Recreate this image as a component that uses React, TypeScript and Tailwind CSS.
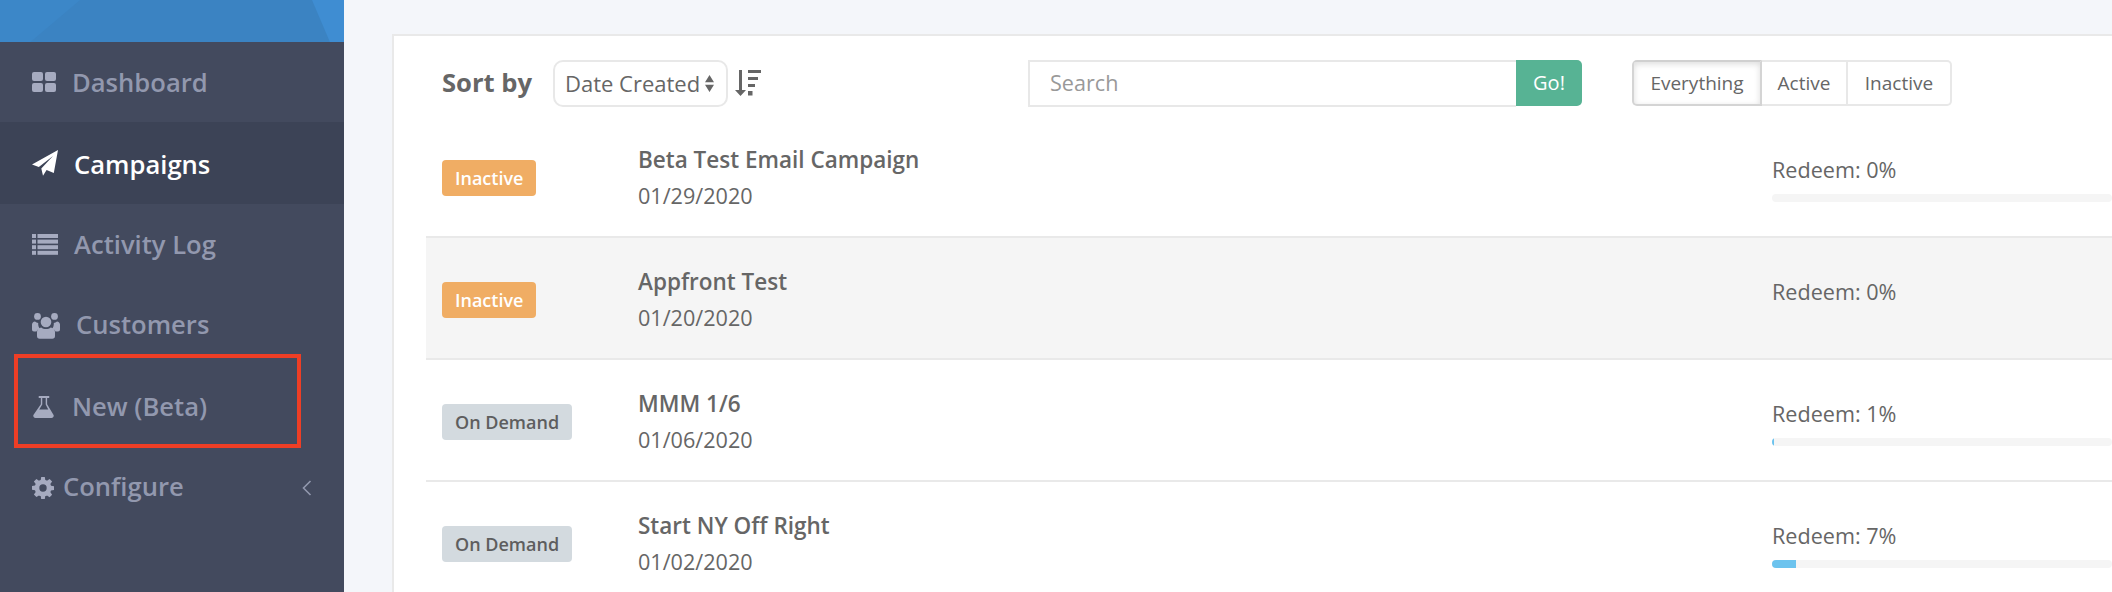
const NAV_ROW = 'flex h-[81px] shrink-0 items-center pl-8 text-[25.6px] font-semibold text-[#9298ae]';

function NavIcon({ name }: { name: string }) {
  if (name === 'dashboard') {
    return (
      <svg width="24" height="20" viewBox="0 0 24 20" fill="currentColor">
        <rect x="0" y="0" width="11" height="9" rx="2" />
        <rect x="13" y="0" width="11" height="9" rx="2" />
        <rect x="0" y="11" width="11" height="9" rx="2" />
        <rect x="13" y="11" width="11" height="9" rx="2" />
      </svg>
    );
  }
  if (name === 'plane') {
    return (
      <svg width="26" height="26" viewBox="0 0 26 26" fill="currentColor">
        <path d="M26 0 21.800 23 14.600 20 11 25.800 9.300 18.500 21 6 6.800 17 0 14.600z" />
      </svg>
    );
  }
  if (name === 'list') {
    return (
      <svg width="26" height="21" viewBox="0 0 26 21" fill="currentColor">
        <rect x="0" y="0" width="4" height="4" />
        <rect x="0" y="5.600" width="4" height="4" />
        <rect x="0" y="11.200" width="4" height="4" />
        <rect x="0" y="16.800" width="4" height="4" />
        <rect x="5.500" y="0" width="20.500" height="4" />
        <rect x="5.500" y="5.600" width="20.500" height="4" />
        <rect x="5.500" y="11.200" width="20.500" height="4" />
        <rect x="5.500" y="16.800" width="20.500" height="4" />
      </svg>
    );
  }
  if (name === 'users') {
    return (
      <svg width="28" height="26" viewBox="0 0 28 26" fill="currentColor">
        <circle cx="5.500" cy="3.400" r="3.400" />
        <circle cx="22.500" cy="3.400" r="3.400" />
        <circle cx="14" cy="9" r="5.300" />
        <path d="M3 8.500c1 .9 2 1.400 3.200 1.500-.2 2 .5 4.500 1.600 5.700-1.500.4-2.700 1.400-3.300 2.800H2c-1.200 0-2-.7-2-2v-5c0-1.500 1.300-3 3-3zM25 8.500c1.700 0 3 1.500 3 3v5c0 1.300-.8 2-2 2h-2.500c-.6-1.400-1.800-2.400-3.300-2.800 1.100-1.200 1.800-3.700 1.600-5.700 1.200-.1 2.200-.6 3.200-1.500z" />
        <path d="M9.300 14.500c1.200 1 2.900 1.500 4.700 1.500s3.500-.5 4.700-1.500c2.500.2 4.300 2 4.300 4.500v4c0 1.700-1 2.800-2.700 2.800H7.700C6 25.800 5 24.700 5 23v-4c0-2.500 1.800-4.300 4.300-4.500z" />
      </svg>
    );
  }
  if (name === 'flask') {
    return (
      <svg className="ml-px" width="21" height="22" viewBox="0 0 22 23" fill="currentColor">
        <path fillRule="evenodd" d="M6 0H17V2H14.800V8.500L21.400 19.500c.9 1.600-.1 3.500-2 3.500H2.600c-1.900 0-2.900-1.900-2-3.500L8.200 8.500V2H6zM9.700 2V9L6.500 14H16L13.300 9V2z" />
      </svg>
    );
  }
  return (
    <svg width="22" height="22" viewBox="0 0 22 22" fill="currentColor">
      <path fillRule="evenodd" d="M9.200 0h3.600l.5 3.100c.6.200 1.200.4 1.700.7l2.600-1.800 2.500 2.500-1.800 2.600c.3.500.5 1.100.7 1.700l3 .5v3.600l-3 .5c-.2.600-.4 1.200-.7 1.700l1.800 2.600-2.500 2.500-2.600-1.800c-.5.300-1.100.5-1.700.7l-.5 3h-3.600l-.5-3c-.6-.2-1.200-.4-1.700-.7L4.400 20l-2.500-2.500 1.800-2.600c-.3-.5-.5-1.100-.7-1.700l-3-.5V9.100l3-.5c.2-.6.4-1.200.7-1.700L1.900 4.500 4.400 2 7 3.800c.5-.3 1.100-.5 1.700-.7zM11 7.300a3.700 3.700 0 1 0 0 7.400 3.700 3.700 0 0 0 0-7.400z" />
    </svg>
  );
}

const campaigns = [
  { name: 'Beta Test Email Campaign', date: '01/29/2020', status: 'Inactive', redeem: 0, fill: 0, bar: true },
  { name: 'Appfront Test', date: '01/20/2020', status: 'Inactive', redeem: 0, fill: 0, bar: false, hover: true },
  { name: 'MMM 1/6', date: '01/06/2020', status: 'On Demand', redeem: 1, fill: 0.6, bar: true },
  { name: 'Start NY Off Right', date: '01/02/2020', status: 'On Demand', redeem: 7, fill: 7, bar: true },
];

export default function App() {
  return (
    <div className="flex h-[592px] w-[2112px] overflow-hidden bg-[#f4f6fa] font-['Open_Sans',sans-serif] text-[#666666]">
      {/* Sidebar */}
      <aside className="relative flex w-[344px] shrink-0 flex-col bg-[#434a5e]">
        <div className="relative h-[42px] shrink-0 overflow-hidden bg-[#3b83c2]">
          <div className="absolute left-0 top-0 h-full w-[80px] bg-[#3c87c8] [clip-path:polygon(0_0,100%_0,38%_100%,0_100%)]" />
          <div className="absolute right-0 top-0 h-full w-[32px] bg-[#3f8dd2] [clip-path:polygon(0_0,100%_0,100%_100%,56%_100%)]" />
        </div>
        <div className="flex h-[80px] shrink-0 items-center pl-8 text-[25.6px] font-semibold text-[#9298ae]">
          <span className="mr-4 flex w-6 text-[#a6abc0]"><NavIcon name="dashboard" /></span>
          <span className="pt-[2px]">Dashboard</span>
        </div>
        <div className="flex h-[82px] shrink-0 items-center bg-[#3c4356] pl-8 text-[25.6px] font-semibold text-white">
          <span className="mr-4 flex w-[26px]"><NavIcon name="plane" /></span>
          <span className="pt-[4px]">Campaigns</span>
        </div>
        <div className={NAV_ROW}>
          <span className="mr-4 flex w-[26px] text-[#a6abc0]"><NavIcon name="list" /></span>
          <span className="pt-[2px]">Activity Log</span>
        </div>
        <div className={NAV_ROW}>
          <span className="mr-4 flex w-[28px] text-[#a6abc0]"><NavIcon name="users" /></span>
          Customers
        </div>
        <div className={NAV_ROW}>
          <span className="mr-[18px] flex w-[22px] text-[#a6abc0]"><NavIcon name="flask" /></span>
          <span className="pt-[2px]">New (Beta)</span>
        </div>
        <div className={NAV_ROW}>
          <span className="mr-[9px] flex w-[22px] text-[#a6abc0]"><NavIcon name="gear" /></span>
          Configure
          <svg className="ml-auto mr-8" width="10" height="16" viewBox="0 0 10 16" fill="none" stroke="#9298ae" strokeWidth="1.600">
            <path d="M8.500 1 1.500 8l7 7" />
          </svg>
        </div>
        {/* annotation drawn over the screenshot */}
        <div className="absolute left-[14px] top-[354px] h-[94px] w-[287px] border-4 border-[#ee3e25]" />
      </aside>

      {/* Main */}
      <main className="min-w-0 flex-1 pl-[48px] pt-[34px]">
        <div className="h-[600px] w-[1800px] border-2 border-r-0 border-[#e9e9e9] bg-white pl-[32px]">
          {/* Toolbar */}
          <div className="-ml-[32px] flex h-[80px] items-start pl-[48px] pt-[24px]">
            <span className="flex h-[47px] w-[111px] items-center text-[25.6px] font-bold">Sort by</span>
            <div className="flex h-[47px] w-[175px] items-center rounded-[10px] border-2 border-[#e8e8e8] pl-[10px] text-[22px]">
              Date Created
              <svg className="ml-[5px]" width="9" height="19" viewBox="0 0 10 19" fill="#666666">
                <path d="M5 0 10 8H0zM5 19 0 11h10z" />
              </svg>
            </div>
            <svg className="ml-[7px] mt-[10px]" width="26" height="26" viewBox="0 0 26 26" fill="#666666">
              <path d="M4 0h3v20h4L5.500 26 0 20h4zM13 0h13v3H13zM13 7h10v3H13zM13 14h7v3h-7zM13 21h4.500v4.500H13z" />
            </svg>
            <div className="ml-[267px] flex h-[47px] w-[554px]">
              <div className="flex w-[488px] items-center border-2 border-r-0 border-[#e8e8e8] pl-[20px] text-[21.6px] text-[#999999]">Search</div>
              <div className="flex h-[46px] w-[66px] items-center justify-center rounded-r-[5px] bg-[#57b394] text-[20px] text-white">Go!</div>
            </div>
            <div className="ml-[50px] flex h-[46px] text-[19px]">
              <div className="flex w-[130px] items-center justify-center rounded-l-[5px] border-2 border-[#d4d4d4] border-t-[#d0d0d0] bg-white shadow-[inset_0_2px_6px_rgba(0,0,0,0.14)]">Everything</div>
              <div className="flex w-[86px] items-center justify-center border-y-2 border-r-2 border-[#e8e8e8]">Active</div>
              <div className="flex w-[104px] items-center justify-center rounded-r-[5px] border-y-2 border-r-2 border-[#e8e8e8]">Inactive</div>
            </div>
          </div>

          {/* Rows */}
          {campaigns.map((c) => (
            <div key={c.name} className={`flex h-[122px] items-start border-b-2 border-[#e9e9e9] ${c.hover ? 'bg-[#f5f5f5]' : 'bg-white'}`}>
              <div className="w-[212px] pl-[16px] pt-[44px]">
                <span
                  className={`inline-flex h-9 items-center rounded-[4px] px-[13px] text-[18px] font-semibold ${
                    c.status === 'Inactive' ? 'bg-[#f0ad64] text-white' : 'bg-[#d3dadf] text-[#5e5e5e]'
                  }`}
                >
                  {c.status}
                </span>
              </div>
              <div className="w-[1134px] pt-[26px] leading-[36px]">
                <div className="text-[22.5px] font-semibold">{c.name}</div>
                <div className="text-[21.6px]">{c.date}</div>
              </div>
              <div className="flex-1 pt-[39px]">
                <div className="text-[21.6px] leading-[30px]">Redeem: {c.redeem}%</div>
                {c.bar && (
                  <div className="mt-[9px] h-2 w-[340px] overflow-hidden rounded-full bg-[#f5f5f5]">
                    <div className="h-full bg-[#6cc3ee]" style={{ width: `${c.fill}%` }} />
                  </div>
                )}
              </div>
            </div>
          ))}
        </div>
      </main>
    </div>
  );
}
